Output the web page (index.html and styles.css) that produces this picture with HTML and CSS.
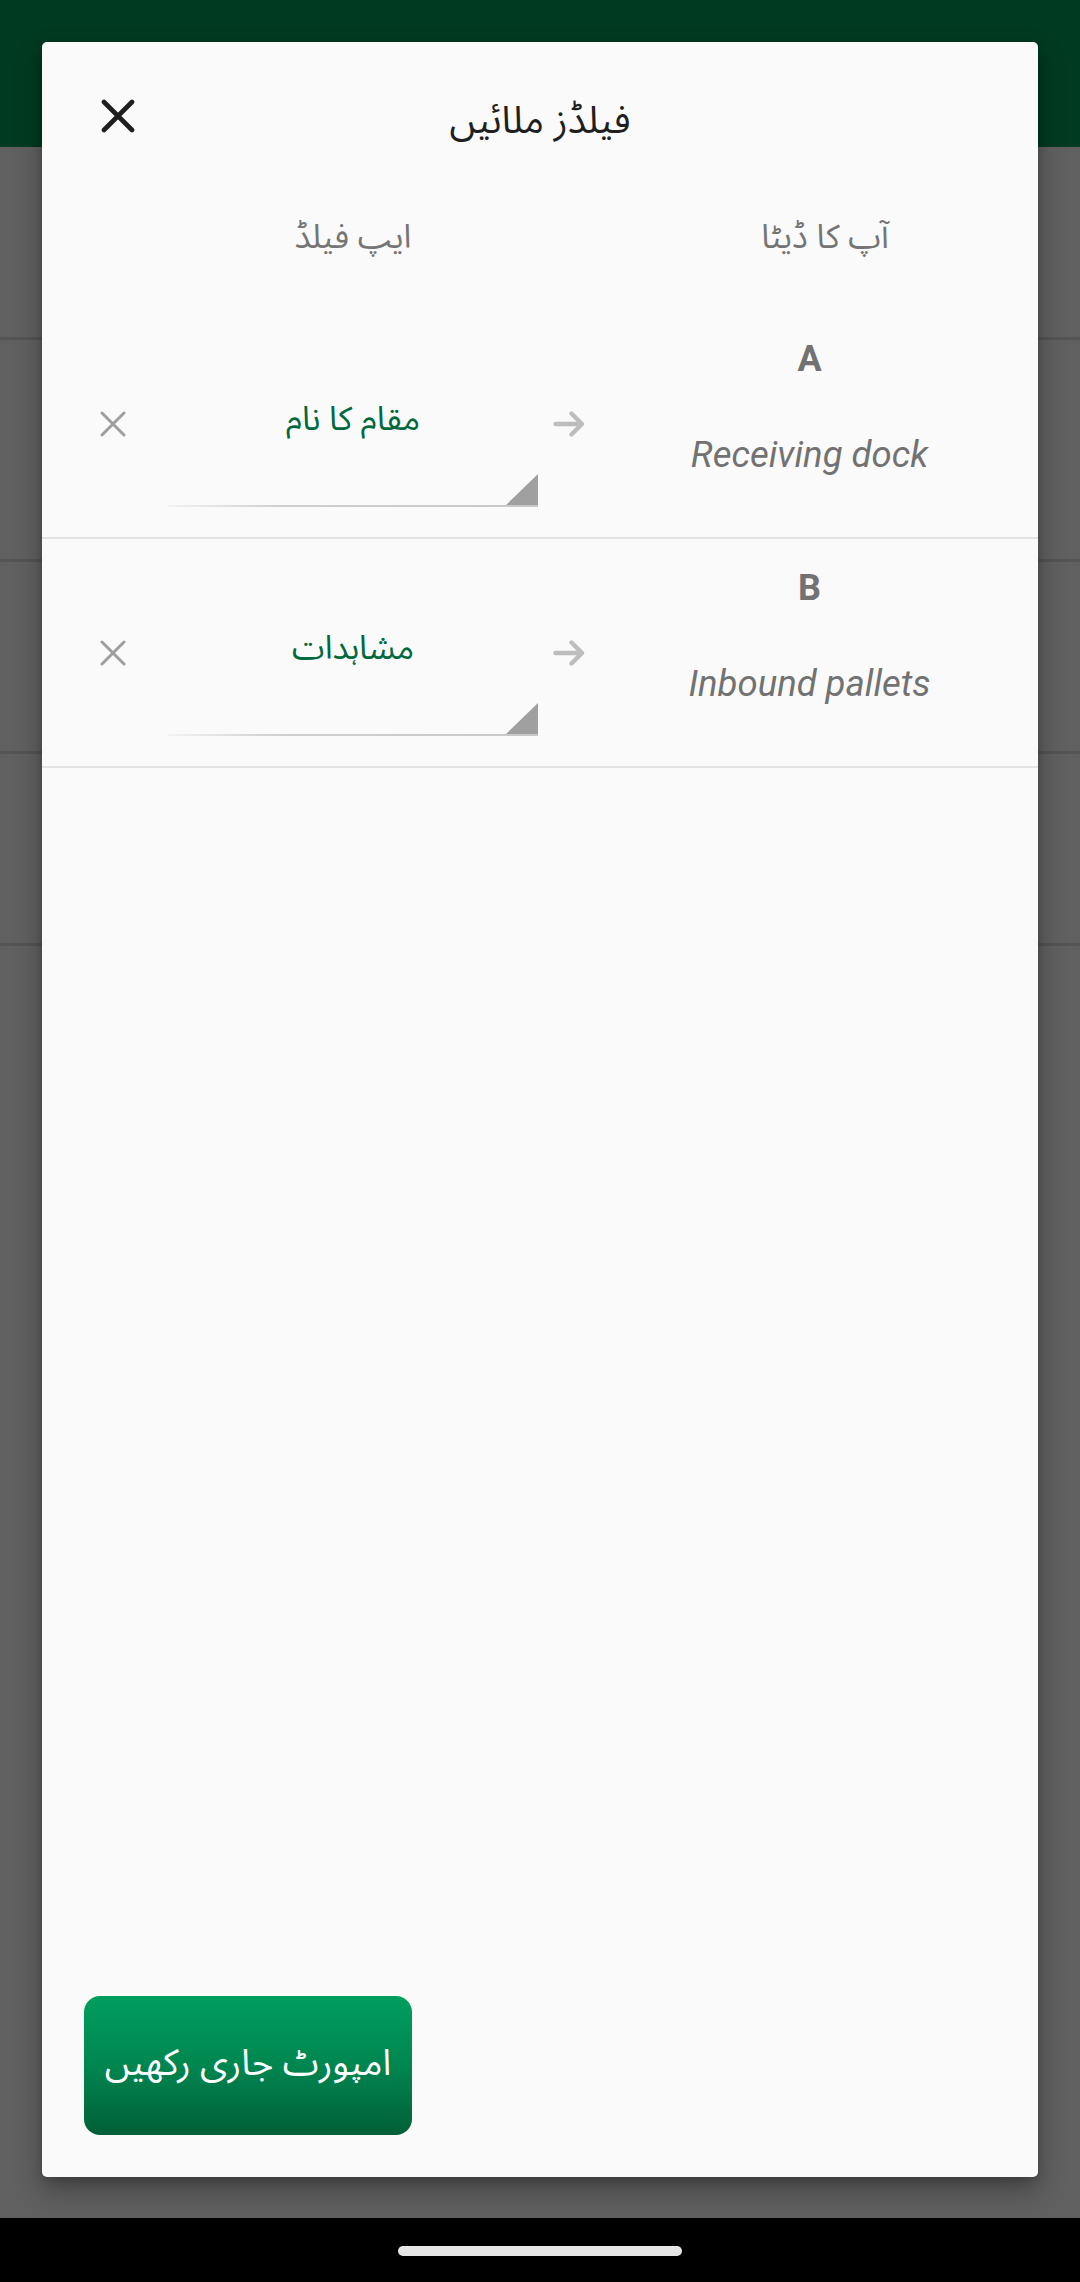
FILE: index.html
```html
<!DOCTYPE html>
<html lang="ur">
<head>
<meta charset="utf-8">
<title>فیلڈز ملائیں</title>
<link rel="stylesheet" href="styles.css">
</head>
<body>
<div class="screen">
  <div class="appbar"></div>
  <div class="page">
    <div class="page-top"></div>
    <div class="page-row r1"></div>
    <div class="page-row r2"></div>
    <div class="page-row r3"></div>
    <div class="page-rest"></div>
  </div>
  <div class="navbar"><div class="pill"></div></div>

  <div class="modal">
    <div class="titlebar">
      <div class="close-wrap">
        <svg class="close" viewBox="0 0 34 34" width="34" height="34">
          <path d="M3 3 L31 31 M31 3 L3 31" stroke="#1e1e1e" stroke-width="4.6" stroke-linecap="round" fill="none"/>
        </svg>
      </div>
      <div class="title" dir="rtl">فیلڈز ملائیں</div>
      <div></div>
    </div>

    <div class="colheads">
      <div class="colhead left" dir="rtl">ایپ فیلڈ</div>
      <div class="colhead right" dir="rtl">آپ کا ڈیٹا</div>
    </div>

    <div class="row">
      <svg class="remove" viewBox="0 0 26 26" width="26" height="26">
        <path d="M2 2 L24 24 M24 2 L2 24" stroke="#9e9e9e" stroke-width="3" stroke-linecap="round" fill="none"/>
      </svg>
      <div class="spinner">
        <div class="spinner-text" dir="rtl">مقام کا نام</div>
        <div class="spinner-foot"><div class="tri"></div></div>
        <div class="spinner-line"></div>
      </div>
      <svg class="arrow" viewBox="0 0 32 26" width="32" height="26">
        <path d="M2.5 13 H29 M18.5 2.5 L29 13 L18.5 23.5" stroke="#bdbdbd" stroke-width="4.4" stroke-linecap="round" stroke-linejoin="round" fill="none"/>
      </svg>
      <div class="source">
        <div class="letter">A</div>
        <div class="sample">Receiving dock</div>
      </div>
    </div>

    <div class="row">
      <svg class="remove" viewBox="0 0 26 26" width="26" height="26">
        <path d="M2 2 L24 24 M24 2 L2 24" stroke="#9e9e9e" stroke-width="3" stroke-linecap="round" fill="none"/>
      </svg>
      <div class="spinner">
        <div class="spinner-text" dir="rtl">مشاہدات</div>
        <div class="spinner-foot"><div class="tri"></div></div>
        <div class="spinner-line"></div>
      </div>
      <svg class="arrow" viewBox="0 0 32 26" width="32" height="26">
        <path d="M2.5 13 H29 M18.5 2.5 L29 13 L18.5 23.5" stroke="#bdbdbd" stroke-width="4.4" stroke-linecap="round" stroke-linejoin="round" fill="none"/>
      </svg>
      <div class="source">
        <div class="letter">B</div>
        <div class="sample">Inbound pallets</div>
      </div>
    </div>

    <div class="spacer"></div>

    <div class="footer">
      <button class="continue" dir="rtl">امپورٹ جاری رکھیں</button>
    </div>
  </div>
</div>
</body>
</html>
```

FILE: styles.css
```css
html, body {
  margin: 0;
  padding: 0;
}
body {
  width: 1080px;
  height: 2282px;
  overflow: hidden;
  background: #5f5f5f;
  font-family: "Noto Sans Arabic UI", "Noto Sans Arabic", "Noto Naskh Arabic", "DejaVu Sans", sans-serif;
}
.screen {
  position: relative;
  width: 1080px;
  height: 2282px;
  display: flex;
  flex-direction: column;
}
.appbar {
  height: 147px;
  background: #003a21;
  flex: none;
}
.page {
  flex: 1;
  display: flex;
  flex-direction: column;
  background: #606060;
}
.page-top {
  height: 190px;
}
.page-row {
  height: 219px;
  border-top: 3px solid #545454;
}
.page-row.r2, .page-row.r3 {
  height: 189px;
}
.page-rest {
  flex: 1;
  border-top: 3px solid #545454;
}
.navbar {
  height: 64px;
  background: #000;
  flex: none;
  display: flex;
  justify-content: center;
  padding-top: 28px;
  box-sizing: border-box;
}
.pill {
  width: 284px;
  height: 10px;
  border-radius: 5px;
  background: #e6e6e6;
}

.modal {
  position: absolute;
  top: 42px;
  left: 42px;
  width: 996px;
  height: 2135px;
  background: #fafafa;
  border-radius: 5px;
  box-shadow: 0 14px 28px rgba(0, 0, 0, 0.28), 0 4px 10px rgba(0, 0, 0, 0.18);
  display: flex;
  flex-direction: column;
}
.titlebar {
  height: 148px;
  display: grid;
  grid-template-columns: 1fr auto 1fr;
  align-items: center;
  flex: none;
}
.close-wrap {
  padding-left: 59px;
  display: flex;
  align-items: center;
}
.title {
  font-size: 38px;
  line-height: 56px;
  padding-top: 4px;
  color: #1f1f1f;
  text-align: center;
}
.colheads {
  height: 120px;
  padding-bottom: 28px;
  box-sizing: border-box;
  display: flex;
  align-items: center;
  padding-left: 126px;
  flex: none;
}
.colhead {
  font-size: 33px;
  line-height: 50px;
  color: #757575;
  text-align: center;
}
.colhead.left {
  width: 370px;
}
.colhead.right {
  flex: 1;
  margin-left: 74px;
}
.row {
  height: 229px;
  box-sizing: border-box;
  border-bottom: 2px solid #e3e3e3;
  display: flex;
  align-items: center;
  flex: none;
}
.remove {
  margin-left: 58px;
  flex: none;
}
.spinner {
  margin-left: 42px;
  width: 370px;
  align-self: stretch;
  display: flex;
  flex-direction: column;
  padding-top: 84px;
  box-sizing: border-box;
  flex: none;
}
.spinner-text {
  font-size: 33px;
  line-height: 48px;
  height: 48px;
  color: #00693d;
  text-align: center;
}
.spinner-foot {
  margin-top: 32px;
  height: 31px;
  display: flex;
  justify-content: flex-end;
}
.tri {
  width: 32px;
  height: 31px;
  background: #a0a0a0;
  clip-path: polygon(100% 0, 100% 100%, 0 100%);
}
.spinner-line {
  height: 2px;
  background: linear-gradient(to right, #f2f2f2 0%, #cfcfcf 30%, #c8c8c8 100%);
}
.arrow {
  margin-left: 15px;
  flex: none;
}
.source {
  flex: 1;
  align-self: stretch;
  display: flex;
  flex-direction: column;
  align-items: center;
  padding-top: 25px;
  padding-right: 4px;
  box-sizing: border-box;
  font-family: Roboto, "Liberation Sans", sans-serif;
  color: #727272;
}
.letter {
  font-size: 36px;
  line-height: 48px;
  font-weight: bold;
}
.sample {
  margin-top: 48px;
  font-size: 36.5px;
  line-height: 48px;
  font-style: italic;
}
.spacer {
  flex: 1;
}
.footer {
  padding: 0 0 42px 42px;
  flex: none;
  display: flex;
}
.continue {
  width: 328px;
  height: 139px;
  border: none;
  border-radius: 16px;
  background: linear-gradient(to bottom, #009e5e 0%, #008650 50%, #005f37 100%);
  color: #ffffff;
  font-family: inherit;
  font-size: 36.5px;
  line-height: 50px;
  white-space: nowrap;
  padding: 0 0 10px 0;
}
```
